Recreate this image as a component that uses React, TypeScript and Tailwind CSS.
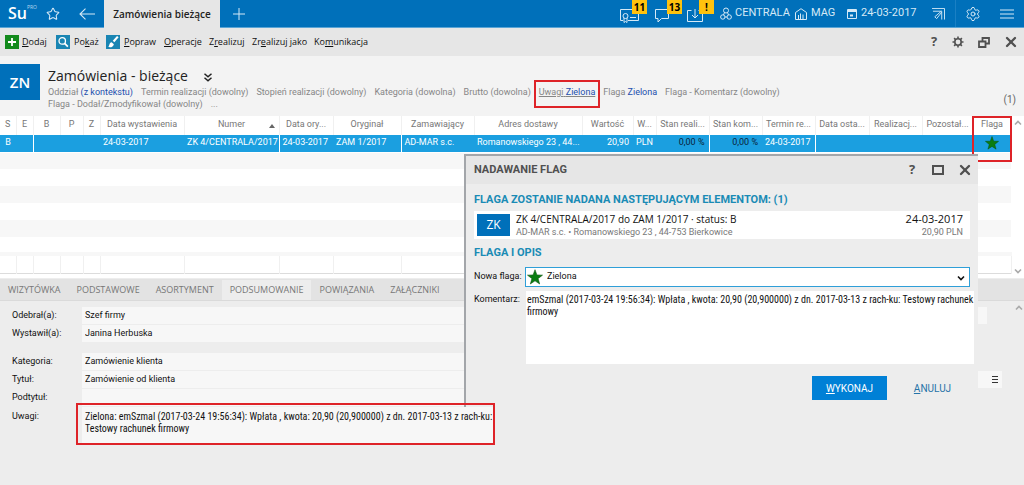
import { useState } from 'react';
import { clsx } from 'clsx';
import { Settings, Star, X } from 'lucide-react';

const filters = [
  { label: 'Oddział', value: '(z kontekstu)', active: true },
  { label: 'Termin realizacji', value: '(dowolny)' },
  { label: 'Stopień realizacji', value: '(dowolny)' },
  { label: 'Kategoria', value: '(dowolna)' },
  { label: 'Brutto', value: '(dowolna)' },
  { label: 'Uwagi', value: 'Zielona', active: true, marked: true },
  { label: 'Flaga', value: 'Zielona', active: true },
  { label: 'Flaga - Komentarz', value: '(dowolny)' },
  { label: 'Flaga - Dodał/Zmodyfikował', value: '(dowolny)' },
];

const columns = [
  { title: 'S', width: 'w-[16px]', value: 'B', center: true },
  { title: 'E', width: 'w-[17px]', line: true },
  { title: 'B', width: 'w-[27px]' },
  { title: 'P', width: 'w-[23px]' },
  { title: 'Z', width: 'w-[17px]' },
  { title: 'Data wystawienia', width: 'w-[84px]', value: '24-03-2017' },
  { title: 'Numer', width: 'w-[95px]', value: 'ZK 4/CENTRALA/2017', line: true, sorted: true },
  { title: 'Data ory...', width: 'w-[54px]', value: '24-03-2017' },
  { title: 'Oryginał', width: 'w-[68px]', value: 'ZAM 1/2017', line: true },
  { title: 'Zamawiający', width: 'w-[73px]', value: 'AD-MAR s.c.' },
  { title: 'Adres dostawy', width: 'w-[108px]', value: 'Romanowskiego 23 , 44...' },
  { title: 'Wartość', width: 'w-[51px]', value: '20,90', right: true },
  { title: 'W...', width: 'w-[23px]', value: 'PLN' },
  { title: 'Stan reali...', width: 'w-[53px]', value: '0,00 %', right: true, dark: true, line: true },
  { title: 'Stan kom...', width: 'w-[53px]', value: '0,00 %', right: true, dark: true },
  { title: 'Termin re...', width: 'w-[53px]', value: '24-03-2017', line: true },
  { title: 'Data osta...', width: 'w-[54px]' },
  { title: 'Realizacj...', width: 'w-[53px]' },
  { title: 'Pozostał...', width: 'w-[51px]', line: true },
  { title: 'Flaga', width: 'w-[38px]', flag: true, center: true },
];

const tabs = ['WIZYTÓWKA', 'PODSTAWOWE', 'ASORTYMENT', 'PODSUMOWANIE', 'POWIĄZANIA', 'ZAŁĄCZNIKI'];

function FlagStar({ className }: { className?: string }) {
  return (
    <svg viewBox="0 0 24 24" className={className} aria-hidden="true">
      <path d="M12 1l2.9 7.9 8.4.3-6.600 5.200 2.300 8.100L12 17.800 5 22.500l2.300-8.100L.7 9.200l8.400-.3z" fill="#0a7d12" stroke="#064d0a" strokeWidth="0.800" />
    </svg>
  );
}

function Chevron({ up, className }: { up?: boolean; className?: string }) {
  return (
    <svg viewBox="0 0 8 6" className={className} fill="none" stroke="currentColor" strokeWidth="1.600" aria-hidden="true">
      <path d={up ? 'M1 4.500l3-3 3 3' : 'M1 1.500l3 3 3-3'} />
    </svg>
  );
}

function Badge({ children }: { children: string }) {
  return (
    <span className="absolute top-0 left-3 h-[14px] w-[15px] bg-[#ffc20e] text-center font-['Open_Sans',sans-serif] text-[10px] leading-[14px] font-bold text-black">
      {children}
    </span>
  );
}

function TopBar() {
  return (
    <header className="flex h-7 items-stretch border-b border-[#5aa5d6] bg-[#0070ba] text-[#d5e9f6]">
      <div className="flex w-10 shrink-0 items-start pl-2 font-['Open_Sans',sans-serif]">
        <span className="text-[16px] leading-[27px] font-semibold text-white">Su</span>
        <span className="pt-1 text-[5px] leading-[6px] text-[#b9daf0]">PRO</span>
      </div>
      <button aria-label="Ulubione" className="flex w-[26px] items-center justify-center">
        <Star className="h-[14px] w-[14px]" strokeWidth={1.8} />
      </button>
      <button aria-label="Wstecz" className="flex w-[38px] items-center justify-center pl-1">
        <svg viewBox="0 0 16 12" className="h-3 w-4" fill="none" stroke="currentColor" strokeWidth="1.100">
          <path d="M16 6H1M6.500.7L1 6l5.500 5.300" />
        </svg>
      </button>
      <button className="-mb-px w-[116px] bg-[#e6e6e6] font-['Open_Sans',sans-serif] text-[10px] font-semibold text-[#222]">
        Zamówienia bieżące
      </button>
      <button aria-label="Nowa karta" className="flex w-[38px] items-center justify-center">
        <svg viewBox="0 0 12 12" className="h-3 w-3" fill="none" stroke="currentColor">
          <path d="M6 0v12M0 6h12" />
        </svg>
      </button>

      <div className="ml-auto flex text-[11px]">
        <button aria-label="Licencje" className="relative w-[35px]">
          <svg viewBox="0 0 20 14" className="mt-1 h-[14px] w-5" fill="none" stroke="currentColor">
            <path d="M3 11.500H.5v-11h18v11H8" />
            <circle cx="5.500" cy="7" r="2.500" />
            <path d="M4 9v4.500l1.500-1 1.500 1V9M10 8.500h6" />
          </svg>
          <Badge>11</Badge>
        </button>
        <button aria-label="Wiadomości" className="relative w-[32px]">
          <svg viewBox="0 0 20 14" className="mt-1 h-[14px] w-5" fill="none" stroke="currentColor">
            <path d="M.5.5h13v9H6.500l-3.500 3.500v-3.500H.5z" />
          </svg>
          <Badge>13</Badge>
        </button>
        <button aria-label="Alerty" className="relative w-[33px]">
          <svg viewBox="0 0 20 14" className="mt-1 h-[14px] w-5" fill="none" stroke="currentColor">
            <path d="M4.500 1.500H.5v11h15v-11h-4M8 0v9M5 6l3 3 3-3" />
          </svg>
          <Badge>!</Badge>
        </button>
        <button className="flex w-[75px] items-center gap-[3px]">
          <svg viewBox="0 0 12 14" className="h-[14px] w-3 shrink-0" fill="none" stroke="currentColor">
            <circle cx="6" cy="3.500" r="2.500" />
            <circle cx="2.800" cy="10" r="2.200" />
            <circle cx="9.200" cy="10" r="2.200" />
            <path d="M4.500 5.500L3.500 8M7.500 5.500l1 2.500M5 10h2" />
          </svg>
          CENTRALA
        </button>
        <button className="flex w-[52px] items-center gap-1">
          <svg viewBox="0 0 12 12" className="h-3 w-3 shrink-0" fill="none" stroke="currentColor">
            <path d="M.5 11.500v-7L6 .7l5.500 3.800v7zM3.500 11V7M5.500 11V5.500M8 11V6.500" />
          </svg>
          MAG
        </button>
        <button className="flex w-[81px] items-center gap-1 whitespace-nowrap">
          <svg viewBox="0 0 10 10" className="h-[10px] w-[10px] shrink-0" fill="none" stroke="currentColor">
            <path d="M.5.5h9v9h-9z" />
            <path d="M.5 2h9" strokeWidth="2" />
            <path d="M3 6.500h3" strokeWidth="2" />
          </svg>
          24-03-2017
        </button>
        <button aria-label="Skróty" className="flex w-[28px] items-center border-r border-[#1b80c4] pl-1">
          <svg viewBox="0 0 14 13" className="h-3 w-[13px]" fill="none" stroke="currentColor">
            <path d="M0 .5h13.500v12M1 3.500h9.500v9M10 3.500l-7 6 2 2 5.500-7" />
          </svg>
        </button>
        <button aria-label="Ustawienia" className="flex w-[34px] items-center justify-center">
          <Settings className="h-4 w-4" strokeWidth={1.5} />
        </button>
        <button aria-label="Menu" className="flex w-[34px] items-center justify-center">
          <svg viewBox="0 0 14 10" className="h-[10px] w-[14px]" stroke="currentColor">
            <path d="M0 1h14M0 5h14M0 9h14" />
          </svg>
        </button>
      </div>
    </header>
  );
}

function Toolbar() {
  return (
    <div className="flex h-7 items-center bg-[#e6e6e6] pl-[5px] font-['Open_Sans',sans-serif] text-[9px] whitespace-nowrap text-[#111]">
      <button className="flex w-[51px] items-center gap-[3px]">
        <svg viewBox="0 0 14 14" className="h-[14px] w-[14px] shrink-0">
          <path fill="#138a1c" d="M0 0h14v14H0z" />
          <path d="M7 3v8M3 7h8" stroke="#fff" strokeWidth="1.800" />
        </svg>
        <span><u>D</u>odaj</span>
      </button>
      <button className="flex w-[50px] items-center gap-1">
        <svg viewBox="0 0 13 13" className="h-[14px] w-[14px] shrink-0" fill="none" stroke="#fff">
          <path fill="#1985b3" stroke="none" d="M0 0h13v13H0z" />
          <circle cx="5.800" cy="5.500" r="3" strokeWidth="1.200" />
          <path d="M8 7.800l3 3" strokeWidth="1.600" />
        </svg>
        <span>Po<u>k</u>aż</span>
      </button>
      <button className="flex w-[58px] items-center gap-1">
        <svg viewBox="0 0 13 13" className="h-[14px] w-[14px] shrink-0">
          <path fill="#1985b3" d="M0 0h13v13H0z" />
          <path d="M11 1.500L7 6" stroke="#fff" strokeWidth="2" />
          <path d="M2 11c1.500-1 .8-4 3.200-4.300L7.300 8.500C7 11 4 12 2 11z" fill="#fff" />
        </svg>
        <span><u>P</u>opraw</span>
      </button>
      <button className="w-[45px] text-left"><u>O</u>peracje</button>
      <button className="w-[43px] text-left">Z<u>r</u>ealizuj</button>
      <button className="w-[62px] text-left">Zr<u>e</u>alizuj jako</button>
      <button className="text-left">Ko<u>m</u>unikacja</button>

      <div className="ml-auto flex items-center text-[#505050]">
        <button aria-label="Pomoc" className="w-6 text-[13px] font-bold">?</button>
        <button aria-label="Konfiguracja" className="flex w-6 justify-center">
          <Gear />
        </button>
        <button aria-label="Przywróć" className="flex w-[27px] justify-center">
          <svg viewBox="0 0 12 11" className="h-[11px] w-3" fill="none" stroke="currentColor" strokeWidth="1.800">
            <path d="M4.500 4V1h6.500v5.500H8M1 4.500h6.500V10H1z" />
          </svg>
        </button>
        <button aria-label="Zamknij" className="flex w-[27px] justify-center">
          <X className="h-4 w-4" strokeWidth={3.5} />
        </button>
      </div>
    </div>
  );
}

function Gear() {
  return (
    <svg viewBox="0 0 12 12" className="h-3 w-3" fill="none" stroke="currentColor">
      <circle cx="6" cy="6" r="3.200" strokeWidth="1.600" />
      <path d="M6 .5v2M6 9.500v2M.5 6h2M9.500 6h2M2.100 2.100l1.400 1.400M8.500 8.500l1.400 1.400M2.100 9.900l1.400-1.400M8.500 3.500l1.400-1.400" strokeWidth="1.600" />
    </svg>
  );
}

function ListHeader() {
  return (
    <div className="flex h-[60px] items-start bg-[#f3f3f3]">
      <div className="mt-2 flex h-9 w-10 shrink-0 items-center justify-center bg-[#0070ba] font-['Open_Sans',sans-serif] text-[15px] font-semibold text-white">
        ZN
      </div>
      <div className="mr-20 ml-2 flex-1">
        <h1 className="mt-2 flex h-[22px] items-center gap-4 font-['Open_Sans',sans-serif] text-[14px] text-[#222]">
          Zamówienia - bieżące
          <svg viewBox="0 0 8 9" className="mt-1 h-[9px] w-2" fill="none" stroke="currentColor" strokeWidth="1.500">
            <path d="M.5.700l3.500 3 3.500-3M.5 4.700l3.500 3 3.500-3" />
          </svg>
        </h1>
        <div className="flex flex-wrap gap-x-2 text-[9px] leading-3 text-[#868686]">
          {filters.map(f => (
            <a key={f.label} href="#" className={clsx('relative', f.marked && 'underline')}>
              {f.label} <span className={clsx(f.active && 'text-[#1c4fae]')}>{f.value}</span>
              {f.marked && <span className="absolute -inset-x-[5px] -top-[6px] -bottom-[10px] border-2 border-[#de2328]" />}
            </a>
          ))}
          <a href="#">...</a>
        </div>
      </div>
      <span className="mt-9 mr-2 text-[10px] text-[#666]">(1)</span>
    </div>
  );
}

function OrdersTable() {
  return (
    <div className="flex h-[163px] border-b border-[#ededed] bg-white">
      <div className="relative min-w-0 flex-1">
        <table className="w-full table-fixed border-collapse text-[9px] whitespace-nowrap">
          <thead>
            <tr className="h-[18px] text-[#777]">
              {columns.map(c => (
                <th key={c.title + c.width} className={clsx(c.width, 'relative border-r border-[#f0f0f0] p-0 text-center font-normal')}>
                  {c.title}
                  {c.sorted && (
                    <svg viewBox="0 0 6 4" className="absolute top-2 right-1 h-1 w-[6px]" fill="#666">
                      <path d="M3 0l3 4H0z" />
                    </svg>
                  )}
                </th>
              ))}
            </tr>
          </thead>
          <tbody>
            <tr className="h-[18px] border-t border-b border-white bg-[#1b9fe0] text-white">
              {columns.map(c => (
                <td
                  key={c.title + c.width}
                  className={clsx(
                    'p-0',
                    c.center ? 'text-center' : c.right ? 'pr-1 text-right' : 'pl-[3px]',
                    c.dark && 'text-[#0a1f3a]',
                    c.line && 'border-r border-white'
                  )}
                >
                  {c.flag ? <FlagStar className="mx-auto h-[14px] w-[14px]" /> : c.value}
                </td>
              ))}
            </tr>
            {[0, 1, 2, 3, 4, 5].map(i => (
              <tr key={i} className="h-[17px] odd:bg-white even:bg-[#f7f7f7]">
                <td colSpan={columns.length} className="p-0" />
              </tr>
            ))}
            <tr className="h-[19px] border-t-4 border-b border-t-[#f7f7f7] border-b-[#dcdcdc]">
              {columns.map(c => (
                <td key={c.title + c.width} className="border-r border-[#f0f0f0] p-0" />
              ))}
            </tr>
          </tbody>
        </table>
        <span className="absolute top-0 -right-px h-[46px] w-10 border-2 border-[#de2328]" />
      </div>
      <div className="flex w-[13px] flex-col items-center justify-between py-1 text-[#aaa]">
        <Chevron up className="h-[6px] w-2" />
        <Chevron className="h-[6px] w-2" />
      </div>
    </div>
  );
}

interface FieldProps {
  id: string;
  label: string;
  value?: string;
  className?: string;
  menu?: boolean;
}

function Field({ id, label, value = '', className, menu }: FieldProps) {
  return (
    <div className="mb-px flex h-[17px] items-center">
      <label htmlFor={id} className="w-[70px] shrink-0">{label}</label>
      <div className={clsx('flex h-full flex-1 items-center bg-[#f7f7f7]', className)}>
        <input id={id} readOnly defaultValue={value} className="min-w-0 flex-1 bg-transparent pl-[3px] outline-none" />
        {menu && (
          <button aria-label="Wybierz" className="px-1">
            <svg viewBox="0 0 6 7" className="h-[7px] w-[6px]" stroke="#333">
              <path d="M0 .5h6M0 3.500h6M0 6.500h6" />
            </svg>
          </button>
        )}
      </div>
    </div>
  );
}

function Details() {
  const [tab, setTab] = useState('PODSUMOWANIE');

  return (
    <section className="bg-[#ededed] text-[9px] text-[#111]">
      <div role="tablist" className="flex h-[22px] items-end border-b border-[#dadada] bg-[#e3e3e3] font-['Open_Sans',sans-serif] text-[#777]">
        {tabs.map(t => (
          <button
            key={t}
            role="tab"
            aria-selected={t === tab}
            onClick={() => setTab(t)}
            className={clsx('h-5 px-2', t === tab && 'bg-[#ededed]')}
          >
            {t}
          </button>
        ))}
      </div>
      <div className="relative pt-[6px] pr-[22px] pl-3">
        <Field id="odebral" label="Odebrał(a):" value="Szef firmy" className="mr-[15px]" />
        <Field id="wystawil" label="Wystawił(a):" value="Janina Herbuska" className="mr-[60px]" />
        <div className="h-[10px]" />
        <Field id="kategoria" label="Kategoria:" value="Zamówienie klienta" className="mr-[60px]" />
        <Field id="tytul" label="Tytuł:" value="Zamówienie od klienta" menu />
        <Field id="podtytul" label="Podtytuł:" className="mr-[60px]" />
        <div className="flex items-start">
          <label htmlFor="uwagi" className="w-[70px] shrink-0 pt-[3px]">Uwagi:</label>
          <div className="relative z-20 w-[411px] bg-[#f7f7f7]">
            <textarea
              id="uwagi"
              readOnly
              rows={3}
              className="block h-9 w-full resize-none bg-transparent pt-1 pl-[3px] font-['Roboto_Condensed','Roboto',sans-serif] text-[10px] leading-3 outline-none"
              defaultValue="Zielona: emSzmal (2017-03-24 19:56:34): Wpłata , kwota: 20,90 (20,900000) z dn. 2017-03-13 z rach-ku: Testowy rachunek firmowy"
            />
            <span className="pointer-events-none absolute -top-1 -right-[2px] -bottom-[2px] -left-[6px] border-2 border-[#de2328]" />
          </div>
        </div>
        <Chevron up className="absolute top-1 right-[1px] h-[6px] w-2 text-[#aaa]" />
      </div>
    </section>
  );
}

function FlagDialog() {
  const [flag, setFlag] = useState('Zielona');

  return (
    <div
      role="dialog"
      aria-labelledby="dialog-title"
      className="absolute top-[154px] right-[46px] z-10 h-[253px] w-[514px] border-t-2 border-l-2 border-[#a3a6aa] bg-[#ededed] text-[9px] text-[#111]"
    >
      <div className="flex h-7 items-center bg-[#e6e6e6] pl-2 font-['Open_Sans',sans-serif] text-[#505050]">
        <h2 id="dialog-title" className="flex-1 font-['Roboto',sans-serif] text-[11px] font-bold">NADAWANIE FLAG</h2>
        <button aria-label="Pomoc" className="w-[26px] text-[13px] font-bold">?</button>
        <button aria-label="Maksymalizuj" className="flex w-[26px] justify-center">
          <svg viewBox="0 0 12 10" className="h-[10px] w-3" fill="none" stroke="currentColor" strokeWidth="2">
            <path d="M1 1h10v8H1z" />
          </svg>
        </button>
        <button aria-label="Zamknij" className="flex w-[27px] justify-center">
          <X className="h-4 w-4" strokeWidth={3.5} />
        </button>
      </div>
      <div className="px-2 pt-2">
        <h3 className="text-[11px] leading-4 font-bold text-[#1a8bb5]">
          FLAGA ZOSTANIE NADANA NASTĘPUJĄCYM ELEMENTOM: (1)
        </h3>
        <div className="mt-[3px] flex h-7 items-center bg-white px-[3px]">
          <div className="mr-[6px] flex h-[22px] w-[33px] items-center justify-center bg-[#0070ba] font-['Open_Sans',sans-serif] text-[12px] text-white">ZK</div>
          <div className="flex-1">
            <div className="font-['Open_Sans',sans-serif] text-[10px] leading-[14px]">ZK 4/CENTRALA/2017 do ZAM 1/2017 · status: B</div>
            <div className="leading-3 text-[#777]">AD-MAR s.c. • Romanowskiego 23 , 44-753 Bierkowice</div>
          </div>
          <div className="pr-1 text-right">
            <div className="font-['Open_Sans',sans-serif] text-[11px] leading-[14px]">24-03-2017</div>
            <div className="leading-3 text-[#777]">20,90 PLN</div>
          </div>
        </div>
        <h3 className="mt-[6px] text-[11px] leading-4 font-bold text-[#1a8bb5]">FLAGA I OPIS</h3>
        <div className="mt-[6px] flex items-center">
          <label htmlFor="flaga" className="w-[51px] shrink-0 whitespace-nowrap">Nowa flaga:</label>
          <div className="relative flex-1">
            <select
              id="flaga"
              value={flag}
              onChange={(e) => setFlag(e.target.value)}
              className="block h-5 w-full appearance-none border border-[#2f9fd8] bg-white pl-[21px] outline-none"
            >
              <option value="Zielona">Zielona</option>
            </select>
            <FlagStar className="pointer-events-none absolute top-[2px] left-[2px] h-4 w-4" />
            <Chevron className="pointer-events-none absolute top-2 right-[5px] h-[6px] w-2" />
          </div>
        </div>
        <div className="mt-1 -mr-1 flex items-start">
          <label htmlFor="komentarz" className="w-[52px] shrink-0 pt-[2px]">Komentarz:</label>
          <textarea
            id="komentarz"
            className="block h-[73px] min-w-0 flex-1 resize-none bg-white pt-[3px] pl-px font-['Roboto_Condensed','Roboto',sans-serif] text-[10px] leading-3 outline-none"
            defaultValue="emSzmal (2017-03-24 19:56:34): Wpłata , kwota: 20,90 (20,900000) z dn. 2017-03-13 z rach-ku: Testowy rachunek firmowy"
          />
        </div>
        <div className="mt-3 flex justify-end gap-2 text-[10px]">
          <button className="h-6 w-[75px] bg-[#0080d6] text-white"><u>W</u>YKONAJ</button>
          <button className="h-6 w-[75px] text-[#2673a8]"><u>A</u>NULUJ</button>
        </div>
      </div>
    </div>
  );
}

export default function App() {
  return (
    <div className="relative min-h-screen bg-[#ededed] font-['Roboto','Noto_Sans',sans-serif]">
      <TopBar />
      <Toolbar />
      <ListHeader />
      <OrdersTable />
      <Details />
      <FlagDialog />
    </div>
  );
}
